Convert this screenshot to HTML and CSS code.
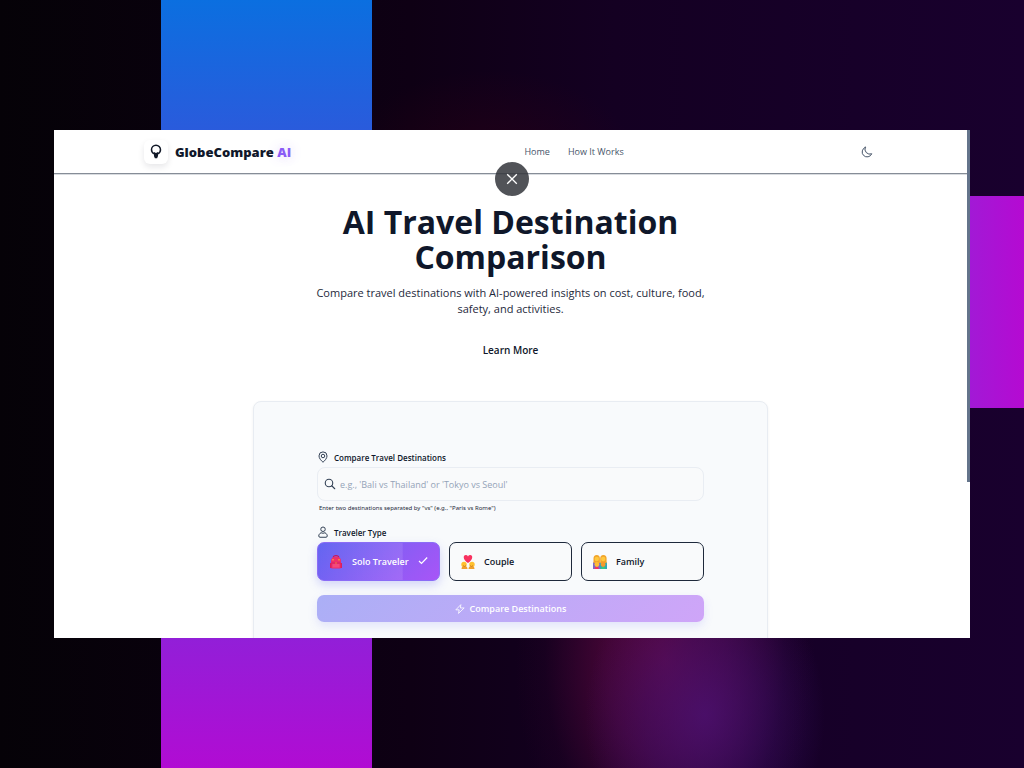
FILE: index.html
```html
<!DOCTYPE html>
<html lang="en">
<head>
<meta charset="utf-8">
<meta name="viewport" content="width=device-width, initial-scale=1">
<title>GlobeCompare AI</title>
<link rel="stylesheet" href="styles.css">
</head>
<body>
<div class="window">
  <div class="scroll-thumb"></div>
  <header class="header">
    <a class="brand" href="#">
      <span class="brand-mark">
        <svg viewBox="0 0 16 20" width="12" height="15" fill="none" stroke="#111827" stroke-width="2"><path d="M5.700 13C3.500 12 2 10 2 7.500a6 6 0 0 1 12 0c0 2.500-1.500 4.500-3.700 5.500"/><path d="M5.300 10.500L8 12l2.700-1.500V16L9.500 19h-3l-1.200-3z" fill="#111827" stroke="none"/></svg>
      </span>
      <span class="brand-name">GlobeCompare <span class="brand-ai">AI</span></span>
    </a>
    <nav class="nav"><a href="#">Home</a><a href="#how">How It Works</a></nav>
    <button class="theme" aria-label="Toggle dark mode">
      <svg viewBox="0 0 24 24" width="12" height="12" fill="none" stroke="#475569" stroke-width="2" stroke-linecap="round" stroke-linejoin="round"><path d="M8.500 2.500a10 10 0 1 0 13 13A10 10 0 0 1 8.500 2.500z"/></svg>
    </button>
  </header>
  <button class="close" aria-label="Close">
    <svg viewBox="0 0 12 12" width="12" height="12" fill="none" stroke="#fff" stroke-width="1.300"><path d="M1.200 1.200l9.600 9.600M10.800 1.200l-9.600 9.600"/></svg>
  </button>
  <main class="main">
    <h1 class="title">AI Travel Destination Comparison</h1>
    <p class="lead">Compare travel destinations with AI-powered insights on cost, culture, food, safety, and activities.</p>
    <a class="learn" href="#how">Learn More</a>
    <form class="card">
      <label class="label" for="places">
        <svg viewBox="0 0 24 24" width="12" height="12" fill="none" stroke="#334155" stroke-width="2"><path d="M12 22.500C8 19 4 14.500 4 9.800a8 8 0 0 1 16 0c0 4.700-4 9.200-8 12.700z"/><circle cx="12" cy="10" r="3.500"/></svg>
        Compare Travel Destinations
      </label>
      <div class="field">
        <svg viewBox="0 0 24 24" width="12" height="12" fill="none" stroke="#334155" stroke-width="2.200" stroke-linecap="round"><circle cx="10" cy="10" r="7.500"/><path d="M15.500 15.500l6 6"/></svg>
        <input class="input" id="places" type="text" placeholder="e.g., 'Bali vs Thailand' or 'Tokyo vs Seoul'">
      </div>
      <p class="hint">Enter two destinations separated by "vs" (e.g., "Paris vs Rome")</p>
      <div class="label" id="type-label">
        <svg viewBox="0 0 24 24" width="12" height="12" fill="none" stroke="#334155" stroke-width="2"><circle cx="12" cy="6.500" r="4.500"/><path d="M8 13.500q4 2 8 0c3 1.500 4.500 4 4.500 6.500 0 1.500-1 2.500-2.500 2.500H6c-1.500 0-2.500-1-2.500-2.500 0-2.500 1.500-5 4.500-6.500z"/></svg>
        Traveler Type
      </div>
      <div class="options" role="group" aria-labelledby="type-label">
        <button class="option selected" type="button" aria-pressed="true">
          <svg viewBox="0 0 16 16" width="16" height="16"><path d="M5.500 4V2.500Q8 .5 10.500 2.500V4" fill="none" stroke="#c2185b" stroke-width="1.200"/><path d="M3 7q0-4.500 5-4.500T13 7v6.500q0 1-1 1H4q-1 0-1-1z" fill="#ee2f6b"/><path d="M2 9h1.500v5H2zM12.500 9H14v5h-1.500z" fill="#d81f60"/><path d="M4.500 10h7v3.500h-7z" fill="#f3487d"/><path d="M3.500 9h9" stroke="#cf2260" stroke-width=".8"/><path d="M5 5v1.500M11 5v1.500M8 8.500v1" stroke="#ffb02e" stroke-width="1.200"/></svg>
          <span>Solo Traveler</span>
          <svg class="check" viewBox="0 0 12 12" width="12" height="12" fill="none" stroke="#fff" stroke-width="1.200"><path d="M2 5l2.500 2.500L10.200 1.500"/></svg>
        </button>
        <button class="option" type="button" aria-pressed="false">
          <svg viewBox="0 0 16 16" width="16" height="16"><path d="M8 9C2.500 5.500 3 1 5.800 1q1.600 0 2.200 1.400Q8.600 1 10.200 1C13 1 13.500 5.500 8 9z" fill="#f8315f"/><circle cx="4" cy="10.500" r="2.700" fill="#ffc02e"/><circle cx="12" cy="10.500" r="2.700" fill="#ffc02e"/><path d="M1.500 15q0-3 3-3t3 3zM8.500 15q0-3 3-3t3 3z" fill="#f0a02d"/><path d="M3 11.500l1.500 1 1.500-1M10 11.500l1.500 1 1.500-1" fill="none" stroke="#c97a1c" stroke-width=".8"/></svg>
          <span>Couple</span>
        </button>
        <button class="option" type="button" aria-pressed="false">
          <svg viewBox="0 0 16 16" width="16" height="16"><path d="M1 15V9.500Q1 7 4.500 7T8 9.500V15z" fill="#7b68c8"/><path d="M8 15V9.500Q8 7 11.500 7T15 9.500V15z" fill="#2fa7b5"/><path d="M1.500 9V4.500q0-3.500 3.200-3.500t3.200 3.500V9zM8.200 9V4.500q0-3.500 3.200-3.500t3.200 3.500V9z" fill="#f2a52b"/><circle cx="4.800" cy="5" r="2.200" fill="#ffc83d"/><circle cx="11.200" cy="5" r="2.200" fill="#ffc83d"/><path d="M2.500 15q0-2.500 2.200-2.500T7 15z" fill="#f8315f"/><path d="M9 15q0-2.500 2.200-2.500t2.300 2.500z" fill="#35c982"/><circle cx="4.900" cy="10.500" r="2.400" fill="#ffbd35"/><circle cx="11.100" cy="10.500" r="2.400" fill="#f49a2c"/></svg>
          <span>Family</span>
        </button>
      </div>
      <button class="submit" type="button" disabled>
        <svg viewBox="0 0 24 24" width="10" height="10" fill="none" stroke="#fff" stroke-width="2" stroke-linejoin="round"><path d="M14 1.500L2 14h8l-1.500 8.500L22 9.500h-9z"/></svg>
        Compare Destinations
      </button>
    </form>
  </main>
</div>
</body>
</html>
```
FILE: styles.css
```css
* {
  box-sizing: border-box;
}

body {
  margin: 0;
  height: 100vh;
  padding: 130px 54px;
  overflow: hidden;
  font-family: "Open Sans", "Noto Sans", sans-serif;
  color: #0f172a;
  background:
    linear-gradient(to right, #a01bd6, #b50ad2) right 196px / 60px 212px no-repeat,
    linear-gradient(#0b6fe0, #2a5bdc 17%, #921fd8 83%, #b10cd3) 161px 0 / 211px 100% no-repeat,
    radial-gradient(ellipse 120px 150px at 705px 715px, rgba(75, 18, 120, .75), rgba(65, 16, 115, .45) 50%, transparent),
    radial-gradient(ellipse 150px 240px at 665px 660px, rgba(125, 12, 75, .7), rgba(110, 10, 70, .5) 40%, rgba(70, 5, 50, .12) 80%, transparent),
    radial-gradient(ellipse 150px 100px at 490px 170px, rgba(60, 0, 20, .4), transparent),
    linear-gradient(to right, #050207, #0e0014 40%, #140022 60%, #19002e);
}

button,
input {
  font: inherit;
  color: inherit;
}

a {
  color: inherit;
  text-decoration: none;
}

svg {
  display: block;
  flex: none;
}

.window {
  position: relative;
  height: 100%;
  padding-right: 3px;
  overflow: hidden;
  background: #fff;
}

.scroll-thumb {
  position: absolute;
  top: 0;
  right: 0;
  width: 3px;
  height: 352px;
  background: #64748b;
}

.header {
  display: flex;
  align-items: center;
  justify-content: space-between;
  height: 44px;
  padding: 0 90px;
  border-bottom: 1px solid #868d97;
  box-shadow: 0 1px 0 #d9dce0;
}

.brand {
  display: flex;
  align-items: center;
  gap: 7px;
}

.brand-mark {
  display: grid;
  place-items: center;
  width: 24px;
  height: 24px;
  border-radius: 6px;
  background: #fff;
  box-shadow: 0 3px 6px rgba(15, 23, 42, .1);
}

.brand-name {
  font-size: 13px;
  font-weight: 800;
}

.brand-ai {
  color: #8b5cf6;
  text-shadow: 0 0 12px rgba(139, 92, 246, .3);
}

.nav {
  display: flex;
  gap: 18px;
  font-size: 9px;
  color: #475569;
}

.theme {
  display: grid;
  place-items: center;
  width: 20px;
  height: 20px;
  padding: 0;
  border: 0;
  background: none;
}

.close {
  position: absolute;
  top: 32px;
  left: calc(50% - 17px);
  display: grid;
  place-items: center;
  width: 34px;
  height: 34px;
  padding: 0;
  border: 0;
  border-radius: 50%;
  background: rgba(52, 55, 60, .86);
}

.main {
  display: flex;
  flex-direction: column;
  align-items: center;
  padding: 30px 20px 0;
}

.title {
  max-width: 400px;
  margin: 0;
  font-size: 32px;
  line-height: 35px;
  font-weight: 700;
  text-align: center;
}

.lead {
  max-width: 400px;
  margin: 11px 0 0;
  font-size: 11px;
  line-height: 16px;
  text-align: center;
  color: #1e293b;
}

.learn {
  margin-top: 25px;
  font-size: 10px;
  line-height: 16px;
  font-weight: 600;
}

.card {
  width: 100%;
  max-width: 515px;
  height: 280px;
  margin-top: 43px;
  padding: 49px 63px;
  border: 1px solid #e8ecf2;
  border-radius: 8px;
  background: #f8fafc;
  box-shadow: 0 1px 3px rgba(15, 23, 42, .06);
}

.label {
  display: flex;
  align-items: center;
  gap: 5px;
  height: 12px;
  font-size: 8px;
  font-weight: 600;
}

.field {
  display: flex;
  align-items: center;
  gap: 4px;
  height: 34px;
  margin-top: 4px;
  padding: 0 6px;
  border: 1px solid #e9edf3;
  border-radius: 8px;
  background: #f9fafb;
}

.input {
  flex: 1;
  min-width: 0;
  padding: 0;
  border: 0;
  outline: 0;
  font-size: 9px;
  background: none;
}

.input::placeholder {
  color: #94a3b8;
}

.hint {
  margin: 2px 0 13px;
  padding: 0 2px;
  font-family: "Noto Sans", sans-serif;
  font-size: 6px;
  line-height: 10px;
  color: #1e293b;
}

.options {
  display: grid;
  grid-template-columns: repeat(3, minmax(0, 1fr));
  gap: 9px;
  margin-top: 4px;
}

.option {
  display: flex;
  align-items: center;
  gap: 8px;
  height: 39px;
  padding: 0 10px;
  border: 1px solid #1e293b;
  border-radius: 7px;
  background: #f9fafb;
  font-size: 9px;
  font-weight: 600;
  white-space: nowrap;
}

.selected {
  border-color: #8b6cf6;
  color: #fff;
  background:
    linear-gradient(to right, transparent, rgba(255, 255, 255, .1)) 0 0 / 70% 100% no-repeat,
    linear-gradient(135deg, #6366f1, #a855f7);
  box-shadow: 0 4px 10px rgba(99, 102, 241, .25);
}

.check {
  margin-left: auto;
}

.submit {
  display: flex;
  align-items: center;
  justify-content: center;
  gap: 5px;
  width: 100%;
  height: 27px;
  margin-top: 14px;
  padding: 0;
  border: 0;
  border-radius: 7px;
  background: linear-gradient(135deg, #abaff6, #cfa5f8);
  box-shadow: 0 4px 10px rgba(99, 102, 241, .15);
  color: #fff;
  font-size: 9px;
  font-weight: 600;
}
```
